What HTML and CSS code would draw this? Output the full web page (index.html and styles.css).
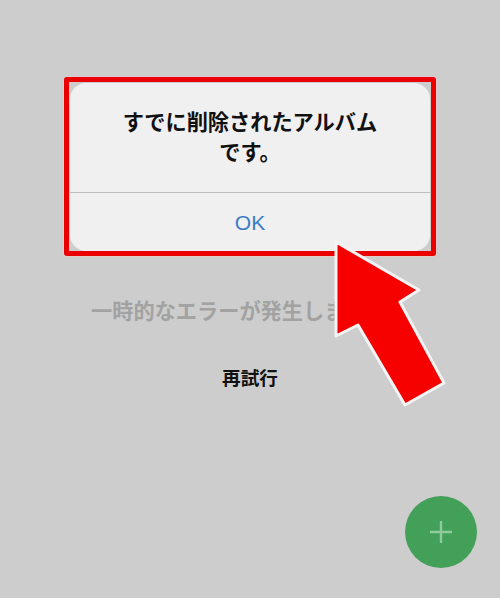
FILE: index.html
```html
<!DOCTYPE html>
<html lang="ja">
<head>
<meta charset="utf-8">
<title>エラー</title>
<link rel="stylesheet" href="styles.css">
</head>
<body>
<main class="screen">
  <section class="error">
    <p class="error-text">一時的なエラーが発生しました。</p>
    <button class="retry" type="button">再試行</button>
  </section>
  <button class="fab" type="button" aria-label="追加">
    <svg class="fab-icon" viewBox="0 0 22 22" width="22" height="22"><path d="M11 0V22M0 11H22"/></svg>
  </button>
  <div class="frame">
    <div class="dialog">
      <p class="dialog-text">すでに削除されたアルバム<br>です。</p>
      <button class="dialog-ok" type="button">OK</button>
    </div>
  </div>
  <svg class="arrow" viewBox="0 0 500 598" width="500" height="598">
    <path d="M336 242L419 290L400 302L444 383L405 405L358 325L336 336Z"/>
  </svg>
</main>
</body>
</html>
```
FILE: styles.css
```css
* { box-sizing: border-box; }
html, body { margin: 0; padding: 0; }
body {
  width: 500px;
  height: 598px;
  overflow: hidden;
  background: #cdcdcd;
  font-family: "Noto Sans CJK JP", "Liberation Sans", sans-serif;
}
.screen {
  position: relative;
  width: 500px;
  height: 598px;
  overflow: hidden;
}
.error {
  display: flex;
  flex-direction: column;
  align-items: center;
  padding-top: 295px;
}
.error-text {
  margin: 0;
  font-size: 21.2px;
  line-height: 30px;
  font-weight: 700;
  color: #a2a2a2;
  white-space: nowrap;
}
.retry {
  margin-top: 37px;
  padding: 0;
  border: 0;
  background: none;
  font: 700 18.6px/30px "Noto Sans CJK JP", sans-serif;
  color: #111;
}
.fab {
  position: absolute;
  left: 405px;
  top: 496px;
  width: 72px;
  height: 72px;
  padding: 0;
  border: 0;
  border-radius: 50%;
  background: #43a058;
  display: flex;
  align-items: center;
  justify-content: center;
}
.fab-icon path {
  fill: none;
  stroke: #8fcb9e;
  stroke-width: 2.4;
}
.frame {
  position: absolute;
  left: 64px;
  top: 77px;
  width: 372px;
  height: 179px;
  border: 5px solid #ea0000;
  border-radius: 3px;
  padding: 1px 1px 0;
  box-shadow: 0 0 1px 1px rgba(255, 200, 200, .5);
}
.dialog {
  display: flex;
  flex-direction: column;
  height: 100%;
  border-radius: 16px;
  background: #f0f0f1;
}
.dialog-text {
  margin: 0;
  height: 110px;
  padding-top: 23px;
  text-align: center;
  font-size: 21.2px;
  line-height: 30px;
  font-weight: 700;
  color: #111;
  border-bottom: 1px solid #bdbdbd;
}
.dialog-ok {
  flex: 1;
  padding: 0;
  border: 0;
  background: none;
  font: 400 21px/1 "Liberation Sans", sans-serif;
  color: #3b7cc4;
}
.arrow {
  position: absolute;
  left: 0;
  top: 0;
  pointer-events: none;
}
.arrow path {
  fill: #f60000;
  stroke: #f4f4f4;
  stroke-width: 3;
  stroke-linejoin: round;
}
```
